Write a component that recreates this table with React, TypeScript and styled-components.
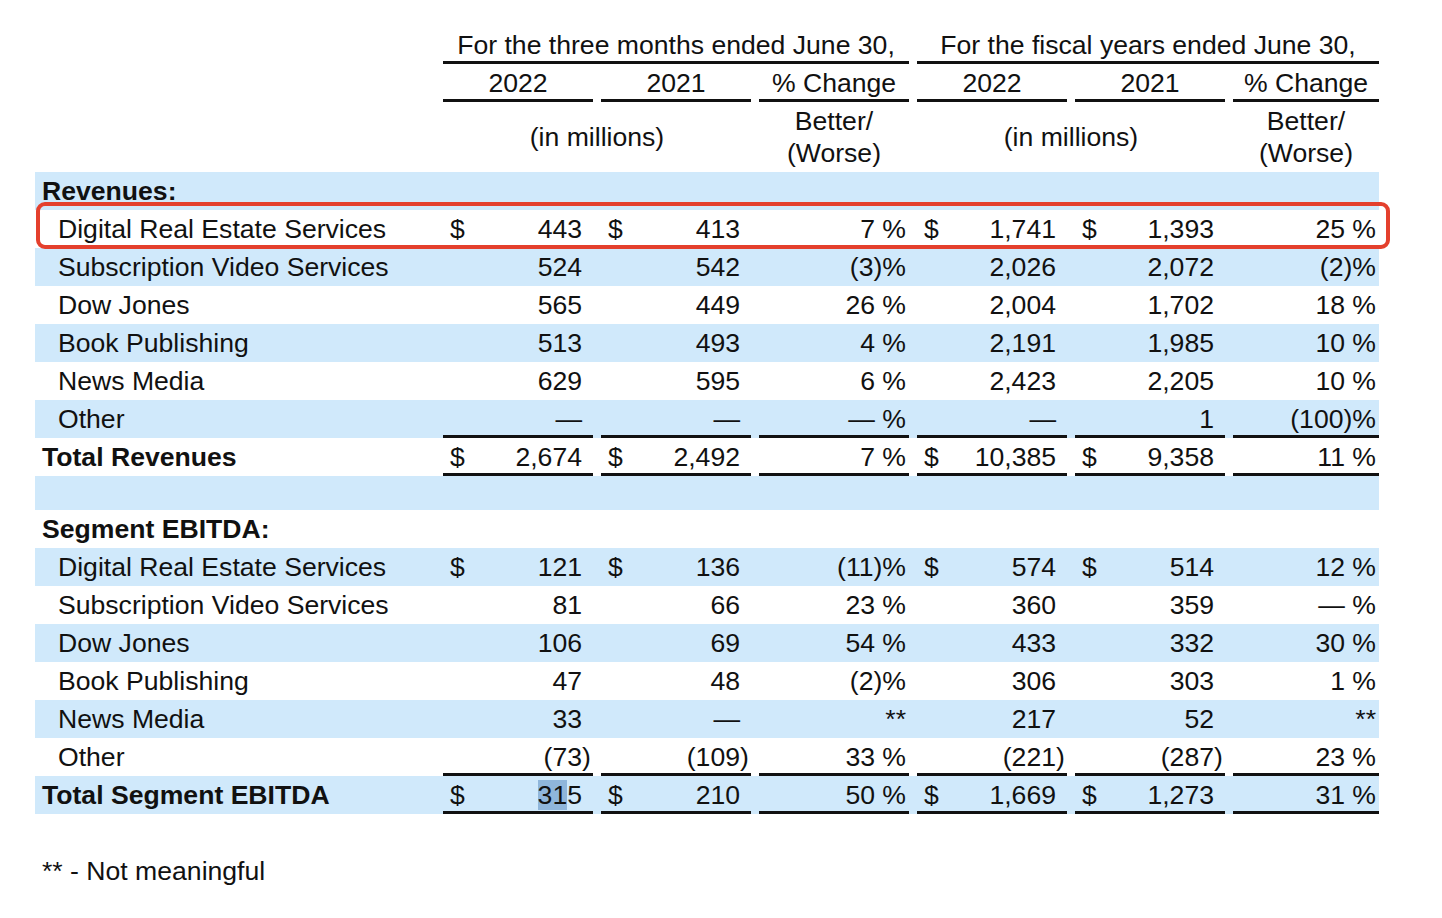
import React from "react";
import styled, { createGlobalStyle } from "styled-components";

const GlobalStyle = createGlobalStyle`
  html, body { margin: 0; padding: 0; background: #ffffff; }
  body {
    font-family: "Liberation Sans", Arial, sans-serif;
    font-size: 26.6px;
    color: #111111;
  }
`;

const Page = styled.div`
  padding: 26px 0 0 35px;
`;

const Table = styled.div`
  width: 1344px;
  display: flex;
  flex-direction: column;
`;

const Row = styled.div<{ $shade?: boolean; $h?: number }>`
  position: relative;
  display: grid;
  grid-template-columns: 400px repeat(5, 150px) 146px;
  column-gap: 8px;
  height: ${(p) => p.$h ?? 38}px;
  background: ${(p) => (p.$shade ? "#d0e9fb" : "transparent")};
`;

const Label = styled.div<{ $indent?: boolean; $bold?: boolean }>`
  display: flex;
  align-items: center;
  padding-left: ${(p) => (p.$indent ? 23 : 7)}px;
  font-weight: ${(p) => (p.$bold ? 700 : 400)};
  white-space: nowrap;
`;

const GroupHead = styled.div`
  grid-column: span 3;
  display: flex;
  align-items: center;
  justify-content: center;
  box-sizing: border-box;
  padding-top: 3px;
  border-bottom: 3px solid #111;
  white-space: nowrap;
`;

const ColHead = styled.div`
  display: flex;
  align-items: center;
  justify-content: center;
  box-sizing: border-box;
  padding-top: 3px;
  border-bottom: 3px solid #111;
  white-space: nowrap;
`;

const SubHead = styled.div<{ $span?: number }>`
  grid-column: span ${(p) => p.$span ?? 1};
  display: flex;
  align-items: center;
  justify-content: center;
  text-align: center;
  line-height: 32px;
  white-space: nowrap;
`;

const Gap = styled.div``;

const Cell = styled.div<{ $rule?: boolean }>`
  display: flex;
  align-items: center;
  justify-content: space-between;
  padding: ${(p) => (p.$rule ? 3 : 0)}px 11px 0 7px;
  box-sizing: border-box;
  border-bottom: ${(p) => (p.$rule ? "3px solid #111" : "none")};
  white-space: nowrap;
`;

const PctCell = styled.div<{ $rule?: boolean }>`
  display: flex;
  align-items: center;
  justify-content: flex-end;
  padding: ${(p) => (p.$rule ? 3 : 0)}px 3px 0 0;
  box-sizing: border-box;
  border-bottom: ${(p) => (p.$rule ? "3px solid #111" : "none")};
  white-space: nowrap;
`;

const Hang = styled.span`
  margin-right: -0.333em;
`;

const Selected = styled.span`
  background: #8fb6db;
`;

const Callout = styled.div`
  position: absolute;
  left: 1px;
  right: -11px;
  top: -8px;
  bottom: -1px;
  border: 4px solid #e4402d;
  border-radius: 9px;
  pointer-events: none;
  z-index: 2;
`;

const Footnote = styled.div`
  margin-top: 38px;
  padding-left: 7px;
  line-height: 38px;
`;

type DataRow = {
  label: string;
  vals: [string, string, string, string, string, string];
  dollar?: boolean;
  bold?: boolean;
  rule?: boolean;
  callout?: boolean;
};

const Num: React.FC<{ v: string }> = ({ v }) => {
  if (v === "315") {
    return (
      <span>
        <Selected>31</Selected>5
      </span>
    );
  }
  if (v.endsWith(")")) {
    return (
      <span>
        {v.slice(0, -1)}
        <Hang>)</Hang>
      </span>
    );
  }
  return <span>{v}</span>;
};

const revenues: DataRow[] = [
  { label: "Digital Real Estate Services", vals: ["443", "413", "7 %", "1,741", "1,393", "25 %"], dollar: true, callout: true },
  { label: "Subscription Video Services", vals: ["524", "542", "(3)%", "2,026", "2,072", "(2)%"] },
  { label: "Dow Jones", vals: ["565", "449", "26 %", "2,004", "1,702", "18 %"] },
  { label: "Book Publishing", vals: ["513", "493", "4 %", "2,191", "1,985", "10 %"] },
  { label: "News Media", vals: ["629", "595", "6 %", "2,423", "2,205", "10 %"] },
  { label: "Other", vals: ["—", "—", "— %", "—", "1", "(100)%"], rule: true },
];

const ebitda: DataRow[] = [
  { label: "Digital Real Estate Services", vals: ["121", "136", "(11)%", "574", "514", "12 %"], dollar: true },
  { label: "Subscription Video Services", vals: ["81", "66", "23 %", "360", "359", "— %"] },
  { label: "Dow Jones", vals: ["106", "69", "54 %", "433", "332", "30 %"] },
  { label: "Book Publishing", vals: ["47", "48", "(2)%", "306", "303", "1 %"] },
  { label: "News Media", vals: ["33", "—", "**", "217", "52", "**"] },
  { label: "Other", vals: ["(73)", "(109)", "33 %", "(221)", "(287)", "23 %"], rule: true },
];

const DataLine: React.FC<{ row: DataRow; shade: boolean }> = ({ row, shade }) => (
  <Row $shade={shade}>
    <Label $indent={!row.bold} $bold={row.bold}>
      {row.label}
    </Label>
    {row.vals.map((v, i) =>
      i % 3 === 2 ? (
        <PctCell key={i} $rule={row.rule}>
          {v}
        </PctCell>
      ) : (
        <Cell key={i} $rule={row.rule}>
          <span>{row.dollar ? "$" : ""}</span>
          <Num v={v} />
        </Cell>
      )
    )}
    {row.callout && <Callout />}
  </Row>
);

export default function App() {
  return (
    <>
      <GlobalStyle />
      <Page>
        <Table>
          <Row>
            <Gap />
            <GroupHead>For the three months ended June 30,</GroupHead>
            <GroupHead>For the fiscal years ended June 30,</GroupHead>
          </Row>
          <Row>
            <Gap />
            <ColHead>2022</ColHead>
            <ColHead>2021</ColHead>
            <ColHead>% Change</ColHead>
            <ColHead>2022</ColHead>
            <ColHead>2021</ColHead>
            <ColHead>% Change</ColHead>
          </Row>
          <Row $h={70}>
            <Gap />
            <SubHead $span={2}>(in millions)</SubHead>
            <SubHead>
              Better/
              <br />
              (Worse)
            </SubHead>
            <SubHead $span={2}>(in millions)</SubHead>
            <SubHead>
              Better/
              <br />
              (Worse)
            </SubHead>
          </Row>

          <Row $shade>
            <Label $bold>Revenues:</Label>
          </Row>
          {revenues.map((r, i) => (
            <DataLine key={r.label} row={r} shade={i % 2 === 1} />
          ))}
          <DataLine
            row={{
              label: "Total Revenues",
              vals: ["2,674", "2,492", "7 %", "10,385", "9,358", "11 %"],
              dollar: true,
              bold: true,
              rule: true,
            }}
            shade={false}
          />
          <Row $shade $h={34} />

          <Row>
            <Label $bold>Segment EBITDA:</Label>
          </Row>
          {ebitda.map((r, i) => (
            <DataLine key={r.label} row={r} shade={i % 2 === 0} />
          ))}
          <DataLine
            row={{
              label: "Total Segment EBITDA",
              vals: ["315", "210", "50 %", "1,669", "1,273", "31 %"],
              dollar: true,
              bold: true,
              rule: true,
            }}
            shade={true}
          />
        </Table>
        <Footnote>** - Not meaningful</Footnote>
      </Page>
    </>
  );
}
